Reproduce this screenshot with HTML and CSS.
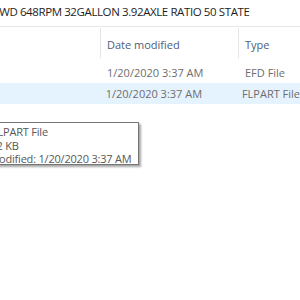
FILE: index.html
```html
<!DOCTYPE html>
<html lang="en">
<head>
  <meta charset="UTF-8" />
  <title>Explorer details</title>
  <link rel="stylesheet" href="styles.css">
</head>
<body>
  <div class="window">
    <div class="title">4WD 648RPM 32GALLON 3.92AXLE RATIO 50 STATE</div>

    <div class="list">
      <div class="header">
        <div class="col name"></div>
        <div class="col date">Date modified</div>
        <div class="col type">Type</div>
      </div>

      <div class="row">
        <div class="col name"></div>
        <div class="col date">1/20/2020 3:37 AM</div>
        <div class="col type">EFD File</div>
      </div>
      <div class="row selected">
        <div class="col name"></div>
        <div class="col date">1/20/2020 3:37 AM</div>
        <div class="col type">FLPART File</div>
      </div>
    </div>

    <!-- hover tooltip -->
    <div class="tooltip">
      <div>Type: FLPART File</div>
      <div>Size: 2.2 KB</div>
      <div>Date modified: 1/20/2020 3:37 AM</div>
    </div>
  </div>
</body>
</html>
```

FILE: styles.css
```css
body {
  margin: 0;
  background: #fff;
  font-family: 'Open Sans', 'Noto Sans', sans-serif;
  overflow: hidden;
}

.window {
  position: relative;
  width: 300px;
  height: 300px;
  overflow: hidden;
}

.title {
  height: 26px;
  line-height: 24px;
  margin-left: -7px;
  font-size: 11.5px;
  letter-spacing: -0.4px;
  color: #1e1e1e;
  white-space: nowrap;
  border-bottom: 1px solid #e5e5e5;
}

.list {
  padding-top: 1px;
}

.header,
.row {
  display: flex;
  white-space: nowrap;
  font-size: 11px;
}

.header {
  height: 30px;
  color: #4c607a;
  margin-bottom: 4px;
}

.header .col {
  height: 30px;
  line-height: 34px;
}

.header .date,
.header .type {
  border-left: 1px solid #e5e5e5;
}

.row {
  height: 21px;
  line-height: 21px;
  color: #6d6d6d;
}

.row.selected {
  background: #e5f3ff;
}

.col.name {
  width: 100px;
}

.col.date {
  width: 131px;
  padding-left: 6px;
}

.col.type {
  padding-left: 6px;
}

.row .col.date {
  padding-left: 7px;
  width: 131px;
}

.row .col.type {
  padding-left: 7px;
}

.tooltip {
  position: absolute;
  left: -44px;
  top: 122px;
  width: 169px;
  height: 36px;
  padding: 2px 6px 3px;
  background: #fff;
  border: 1px solid #767676;
  box-shadow: 2px 2px 2px rgba(0, 0, 0, 0.35);
  font-size: 11px;
  letter-spacing: -0.2px;
  line-height: 13.5px;
  color: #575757;
  white-space: nowrap;
}
```
